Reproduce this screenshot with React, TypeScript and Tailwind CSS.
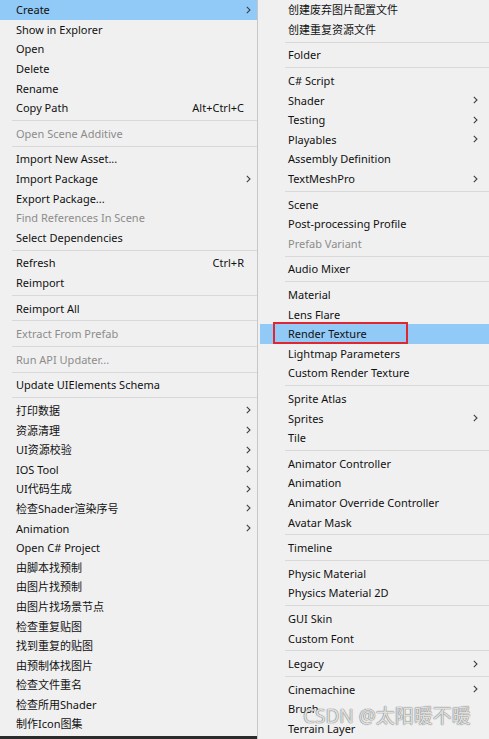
import React from "react";

type Item =
  | { t: "sep" }
  | { t: "item"; label: string; disabled?: boolean; sub?: boolean; shortcut?: string; hl?: boolean; box?: boolean };

const I = (label: string, o: Partial<{ disabled: boolean; sub: boolean; shortcut: string; hl: boolean; box: boolean }> = {}): Item => ({
  t: "item",
  label,
  ...o,
});
const S: Item = { t: "sep" };

const left: Item[] = [
  I("Create", { sub: true, hl: true }),
  I("Show in Explorer"),
  I("Open"),
  I("Delete"),
  I("Rename"),
  I("Copy Path", { shortcut: "Alt+Ctrl+C" }),
  S,
  I("Open Scene Additive", { disabled: true }),
  S,
  I("Import New Asset..."),
  I("Import Package", { sub: true }),
  I("Export Package..."),
  I("Find References In Scene", { disabled: true }),
  I("Select Dependencies"),
  S,
  I("Refresh", { shortcut: "Ctrl+R" }),
  I("Reimport"),
  S,
  I("Reimport All"),
  S,
  I("Extract From Prefab", { disabled: true }),
  S,
  I("Run API Updater...", { disabled: true }),
  S,
  I("Update UIElements Schema"),
  S,
  I("打印数据", { sub: true }),
  I("资源清理", { sub: true }),
  I("UI资源校验", { sub: true }),
  I("IOS Tool", { sub: true }),
  I("UI代码生成", { sub: true }),
  I("检查Shader渲染序号", { sub: true }),
  I("Animation", { sub: true }),
  I("Open C# Project"),
  I("由脚本找预制"),
  I("由图片找预制"),
  I("由图片找场景节点"),
  I("检查重复贴图"),
  I("找到重复的贴图"),
  I("由预制体找图片"),
  I("检查文件重名"),
  I("检查所用Shader"),
  I("制作Icon图集"),
];

const right: Item[] = [
  I("创建废弃图片配置文件"),
  I("创建重复资源文件"),
  S,
  I("Folder"),
  S,
  I("C# Script"),
  I("Shader", { sub: true }),
  I("Testing", { sub: true }),
  I("Playables", { sub: true }),
  I("Assembly Definition"),
  I("TextMeshPro", { sub: true }),
  S,
  I("Scene"),
  I("Post-processing Profile"),
  I("Prefab Variant", { disabled: true }),
  S,
  I("Audio Mixer"),
  S,
  I("Material"),
  I("Lens Flare"),
  I("Render Texture", { hl: true, box: true }),
  I("Lightmap Parameters"),
  I("Custom Render Texture"),
  S,
  I("Sprite Atlas"),
  I("Sprites", { sub: true }),
  I("Tile"),
  S,
  I("Animator Controller"),
  I("Animation"),
  I("Animator Override Controller"),
  I("Avatar Mask"),
  S,
  I("Timeline"),
  S,
  I("Physic Material"),
  I("Physics Material 2D"),
  S,
  I("GUI Skin"),
  I("Custom Font"),
  S,
  I("Legacy", { sub: true }),
  S,
  I("Cinemachine", { sub: true }),
  I("Brush"),
  I("Terrain Layer"),
];

function Chevron() {
  return (
    <svg width="5" height="8" viewBox="0 0 5 8" className="shrink-0">
      <path d="M0.8 0.8 L4 4 L0.8 7.2" fill="none" stroke="#404040" strokeWidth="1.1" />
    </svg>
  );
}

function LeftMenu() {
  return (
    <div className="w-[257px] flex flex-col shrink-0">
      {left.map((it, i) =>
        it.t === "sep" ? (
          <div key={i} className="h-[6px] flex items-center pl-[12px]">
            <div className="h-px w-full bg-[#d9d9d9]" />
          </div>
        ) : (
          <div
            key={i}
            className={
              "h-[19.6px] shrink-0 flex items-center pl-[16px] " +
              (it.hl ? "bg-[#91c9f7] " : "") +
              (it.disabled ? "text-[#8c8c8c]" : "text-[#111111]")
            }
          >
            <span className="flex-1 whitespace-nowrap">{it.label}</span>
            {it.shortcut && <span className="pr-[13px] whitespace-nowrap">{it.shortcut}</span>}
            {it.sub && (
              <span className="pr-[6px] flex items-center">
                <Chevron />
              </span>
            )}
          </div>
        )
      )}
      <div className="flex-1" />
      <div className="h-[3px] bg-[#2b2b2b]" />
    </div>
  );
}

function RightMenu() {
  return (
    <div className="flex-1 flex flex-col border-l border-[#c6c6c6] pl-[2px]">
      {right.map((it, i) =>
        it.t === "sep" ? (
          <div key={i} className="h-[6px] flex items-center pl-[25px]">
            <div className="h-px w-full bg-[#d9d9d9]" />
          </div>
        ) : (
          <div
            key={i}
            className={
              "relative h-[19.6px] shrink-0 flex items-center pl-[28px] " +
              (it.hl ? "bg-[#91c9f7] " : "") +
              (it.disabled ? "text-[#8c8c8c]" : "text-[#111111]")
            }
          >
            <span className="flex-1 whitespace-nowrap">{it.label}</span>
            {it.sub && (
              <span className="pr-[11px] flex items-center">
                <Chevron />
              </span>
            )}
            {it.box && (
              <div className="absolute left-[13px] top-[-2px] w-[135px] h-[22px] border-2 border-[#e0262e]" />
            )}
          </div>
        )
      )}
    </div>
  );
}

export default function App() {
  return (
    <div className="relative w-[489px] h-[739px] overflow-hidden flex bg-[#f0f0f0] text-[11px] leading-none font-['Noto_Sans','Noto_Sans_CJK_SC',sans-serif]">
      <LeftMenu />
      <RightMenu />
      <div className="absolute left-[303px] top-[707px] text-[19px] leading-none text-[rgba(255,255,255,0.8)] [text-shadow:0_0_1px_#6b6b6b,0_0_1px_#6b6b6b] font-['Noto_Sans','Noto_Sans_CJK_SC',sans-serif] whitespace-nowrap">
        CSDN @太阳暖不暖
      </div>
    </div>
  );
}
